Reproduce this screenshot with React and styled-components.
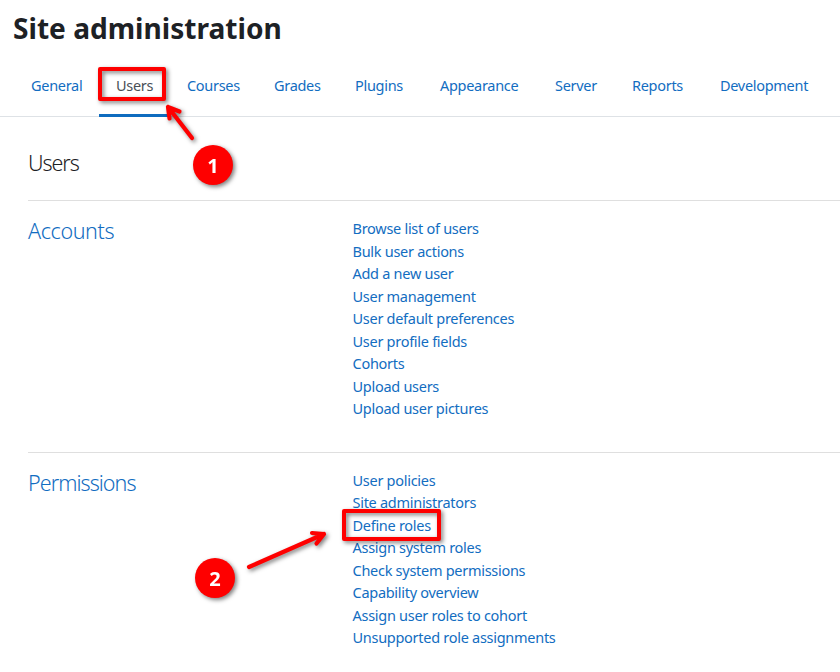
import React from 'react';
import styled, { createGlobalStyle, css } from 'styled-components';

const Global = createGlobalStyle`
  * { box-sizing: border-box; }
  body { margin: 0; background: #fff; color: #1d2125; font-family: "Noto Sans", sans-serif; font-size: 14.5px; overflow: hidden; }
`;
const Page = styled.main`
  position: relative; display: flex; flex-direction: column;
  width: 840px; height: 672px; overflow: hidden; background: #fff;
`;
const Title = styled.h1`margin: 0; padding: 7px 0 6px 13px; font-size: 28.1px; line-height: 42px; font-weight: 700; white-space: nowrap;`;
const Tabs = styled.nav`
  display: grid; grid-template-columns: 85px 71px 87px 81px 85px 115px 77px 88px 1fr;
  height: 62px; padding-left: 14px; border-bottom: 1px solid #dee2e6;
`;
const Tab = styled.a`
  position: relative; height: 62px; padding-left: 17px; line-height: 61px;
  letter-spacing: -0.3px; white-space: nowrap;
  color: ${p => (p.$active ? '#495057' : '#126dc1')};
  border-bottom: ${p => (p.$active ? '3px solid #0f6cbf' : '0')};
`;
const Content = styled.div`display: flex; flex-direction: column; padding-left: 28px;`;
const Heading = styled.h2`margin: 0; padding: 30px 0 21px; font-size: 21.5px; line-height: 32px; font-weight: 300; letter-spacing: -1.05px;`;
const Section = styled.section`display: grid; grid-template-columns: 324.5px 1fr; height: 252px; padding-top: 16px; border-top: 1px solid #dfdfdf;`;
const SectionTitle = styled.h3`margin: 0; font-size: 21.5px; line-height: 28px; font-weight: 300; color: #126dc1; letter-spacing: ${p => p.$tracking}em;`;
const Links = styled.ul`
  display: flex; flex-direction: column; list-style: none; margin: 0; padding: 0;
  ${p => p.$snug && css`margin-top: -0.2px;`}
`;
const Item = styled.li`position: relative; height: 22.5px; line-height: 22.5px; letter-spacing: -0.28px; color: #126dc1; white-space: nowrap;`;

const Frame = styled.span`
  position: absolute; border: 4px solid #fe0000; border-radius: 2px;
  filter: drop-shadow(2px 2px 2px rgba(0, 0, 0, .5));
`;
const TabFrame = styled(Frame)`inset: 12px 4px 13px -1px;`;
const LinkFrame = styled(Frame)`z-index: 1; top: -5px; left: -10.5px; width: 99px; height: 32px;`;

const Callouts = styled.svg`
  position: absolute; inset: 0; pointer-events: none; z-index: 2;
  filter: drop-shadow(2px 2px 2px rgba(0, 0, 0, .5));
`;
const Arrow = styled.path`fill: none; stroke: #fe0000; stroke-width: 4.2; stroke-linecap: round; stroke-linejoin: round;`;
const Disc = styled.circle`fill: #fe0000;`;
const Digit = styled.text`fill: #fff; font: 700 20px "Open Sans", sans-serif; text-anchor: middle;`;

const tabs = ['General', 'Users', 'Courses', 'Grades', 'Plugins', 'Appearance', 'Server', 'Reports', 'Development'];
const sections = [
  { title: 'Accounts', tracking: -0.018, links: ['Browse list of users', 'Bulk user actions', 'Add a new user', 'User management', 'User default preferences', 'User profile fields', 'Cohorts', 'Upload users', 'Upload user pictures'] },
  { title: 'Permissions', tracking: -0.044, snug: true, links: ['User policies', 'Site administrators', 'Define roles', 'Assign system roles', 'Check system permissions', 'Capability overview', 'Assign user roles to cohort', 'Unsupported role assignments'] },
];

export default function App() {
  return (
    <Page>
      <Global />
      <Title>Site administration</Title>
      <Tabs>
        {tabs.map(t => (
          <Tab key={t} $active={t === 'Users'}>{t}{t === 'Users' && <TabFrame />}</Tab>
        ))}
      </Tabs>
      <Content>
        <Heading>Users</Heading>
        {sections.map(s => (
          <Section key={s.title}>
            <SectionTitle $tracking={s.tracking}>{s.title}</SectionTitle>
            <Links $snug={s.snug}>
              {s.links.map(l => <Item key={l}>{l}{l === 'Define roles' && <LinkFrame />}</Item>)}
            </Links>
          </Section>
        ))}
      </Content>
      <Callouts width="840" height="672">
        <Arrow d="M192 138L168 107M179.5 111.5L168 107L169.5 118.5" />
        <Arrow d="M249 567L324 534M312 533L324 534L316.5 543.5" />
        <Disc cx="213" cy="165" r="20" />
        <Disc cx="215" cy="578" r="20" />
        <Digit x="213" y="172.5">1</Digit>
        <Digit x="215" y="585.5">2</Digit>
      </Callouts>
    </Page>
  );
}
